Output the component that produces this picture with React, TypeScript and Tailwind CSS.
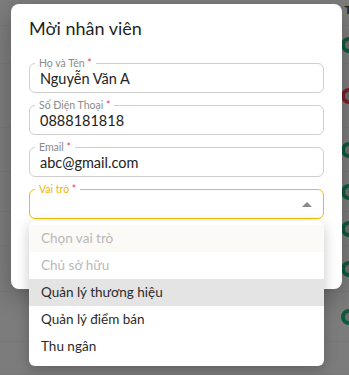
import { ReactNode } from 'react'

type Field = { label: string; value: string }

const fields: Field[] = [
  { label: 'Họ và Tên', value: 'Nguyễn Văn A' },
  { label: 'Số Điện Thoại', value: '0888181818' },
  { label: 'Email', value: 'abc@gmail.com' },
]

const roles = [
  { label: 'Chọn vai trò', muted: true, tint: true },
  { label: 'Chủ sở hữu', muted: true },
  { label: 'Quản lý thương hiệu', active: true },
  { label: 'Quản lý điểm bán' },
  { label: 'Thu ngân' },
]

// background list rows peeking out on the right edge behind the overlay
const bgRows = [
  { h: 'h-[26px]', dot: '' },
  { h: 'h-[38px]', dot: 'green' },
  { h: 'h-[64px]', dot: 'red' },
  { h: 'h-[44px]', dot: 'green' },
  { h: 'h-[40px]', dot: 'green' },
  { h: 'h-[34px]', dot: 'green' },
  { h: 'h-[46px]', dot: 'green' },
  { h: 'h-[50px]', dot: 'green' },
  { h: 'h-[33px]', dot: '' },
]

function Outlined({ label, focused, children }: { label: string; focused?: boolean; children?: ReactNode }) {
  return (
    <div
      className={`relative h-[30px] rounded-[6px] border ${focused ? 'border-[#f5bd00]' : 'border-[#cfcfcf]'} flex items-center pl-[10px] pr-[10px]`}
    >
      <span
        className={`absolute left-[5px] -top-[7px] bg-white px-[4px] text-[10.5px] leading-[12px] ${focused ? 'text-[#f0b400]' : 'text-[#8a8a8a]'}`}
      >
        {label} <span className="text-[#e0455a]">*</span>
      </span>
      {children}
    </div>
  )
}

export default function App() {
  return (
    <div className="relative w-[349px] h-[375px] overflow-hidden bg-[#7c7c7c] font-['Lato',sans-serif]">
      {/* dimmed page behind the dialog */}
      <div className="flex flex-col">
        {bgRows.map((r, i) => (
          <div key={i} className={`${r.h} w-full flex items-center justify-end border-b border-[#777777]`}>
            {i === 0 && (
              <span className="mr-[-6px] -mt-[6px] text-[12px] font-bold text-[#1d1d1d] whitespace-nowrap">Tr</span>
            )}
            {r.dot && (
              <div
                className={`w-[16px] h-[16px] mr-[-8px] rounded-full border-[4px] bg-[#6e6e6e] ${r.dot === 'red' ? 'border-[#7a1f2b]' : 'border-[#0d5a3c]'}`}
              />
            )}
          </div>
        ))}
      </div>

      {/* dialog */}
      <div className="absolute left-[11px] top-[4px] w-[331px] h-[285px] rounded-[8px] bg-white shadow-[0_8px_24px_rgba(0,0,0,0.25)] px-[18px] pt-[12px]">
        <h2 className="text-[18px] leading-[24px] text-[#1f1f1f]">Mời nhân viên</h2>
        <div className="mt-[23px] flex flex-col gap-[12px]">
          {fields.map(f => (
            <Outlined key={f.label} label={f.label}>
              <span className="text-[14.5px] text-[#222222] pt-[2px]">{f.value}</span>
            </Outlined>
          ))}
          <div className="relative">
            <Outlined label="Vai trò" focused>
              <span className="flex-1" />
              <svg width="10" height="5" viewBox="0 0 10 5" className="mr-[1px]">
                <path d="M0 5 L5 0 L10 5 Z" fill="#8a8a8a" />
              </svg>
            </Outlined>
            {/* open menu */}
            <div className="absolute z-10 left-0 top-[32px] w-full rounded-[6px] bg-white shadow-[0_4px_14px_rgba(0,0,0,0.22)] pt-[4px] pb-[6px]">
              {roles.map(r => (
                <div
                  key={r.label}
                  className={`h-[27px] px-[12px] flex items-center text-[13.5px] ${r.muted ? 'text-[#b8b8b8]' : 'text-[#2b2b2b]'} ${r.active ? 'bg-[#e4e4e4]' : r.tint ? 'bg-[#fcfaf6]' : ''}`}
                >
                  {r.label}
                </div>
              ))}
            </div>
          </div>
        </div>
        <div className="mt-[34px] flex justify-end pr-[5px]">
          <div className="w-[60px] h-[29px] rounded-full bg-[#f5bc00]" />
        </div>
      </div>
    </div>
  )
}
